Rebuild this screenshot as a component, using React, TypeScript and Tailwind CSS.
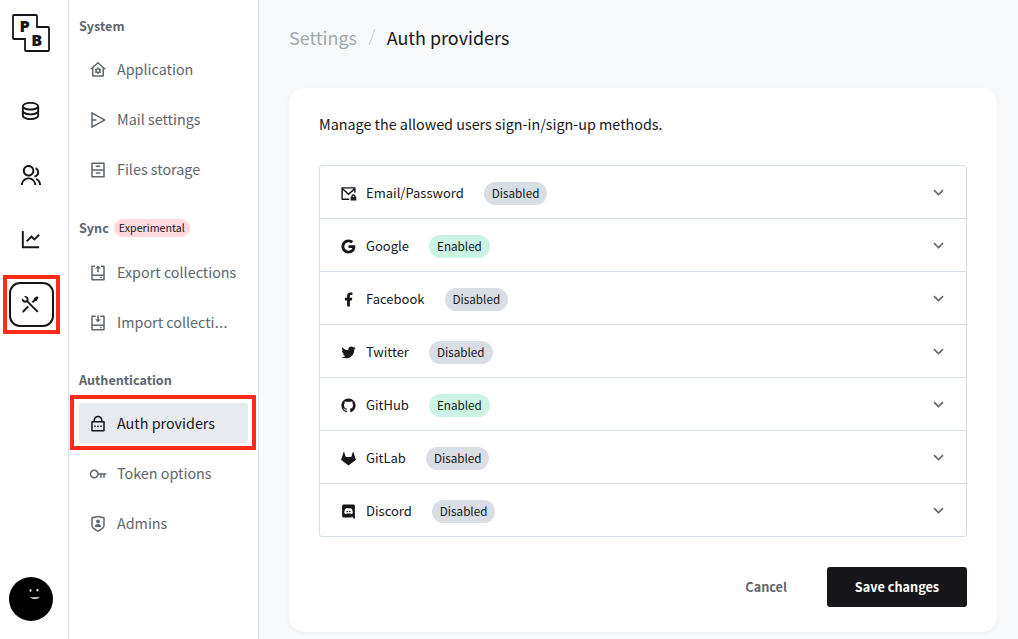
import React from "react";
import type { IconType } from "react-icons";
import {
  RiDatabase2Line, RiGroupLine, RiLineChartLine, RiToolsLine, RiHomeGearLine, RiSendPlane2Line,
  RiArchiveDrawerLine, RiUninstallLine, RiInstallLine, RiLockPasswordLine, RiKeyLine, RiShieldUserLine,
  RiMailLockLine, RiGoogleFill, RiFacebookFill, RiTwitterFill, RiGithubFill,
  RiArrowDownSLine,
} from "react-icons/ri";

type IconProps = { size?: number };

function Discord({ size = 17 }: IconProps) {
  return (
    <svg width={size} height={size} viewBox="0 0 24 24" fill="currentColor">
      <path d="M10.076 11c.6 0 1.086.45 1.075 1 0 .55-.474 1-1.075 1C9.486 13 9 12.55 9 12s.475-1 1.076-1zm3.848 0c.601 0 1.076.45 1.076 1s-.475 1-1.076 1c-.59 0-1.075-.45-1.075-1s.474-1 1.075-1zm4.967-9C20.054 2 21 2.966 21 4.163V23l-2.211-1.995-1.245-1.176-1.317-1.25.546 1.943H5.109C3.946 20.522 3 19.556 3 18.359V4.163C3 2.966 3.946 2 5.109 2H18.89zm-3.97 13.713c2.273-.073 3.148-1.596 3.148-1.596 0-3.381-1.482-6.122-1.482-6.122-1.48-1.133-2.89-1.102-2.89-1.102l-.144.168c1.749.546 2.561 1.334 2.561 1.334a8.263 8.263 0 0 0-3.096-1.008 8.527 8.527 0 0 0-2.077.02c-.062 0-.114.011-.175.021-.36.032-1.235.168-2.335.662-.38.178-.607.305-.607.305s.854-.83 2.705-1.376l-.103-.126s-1.409-.031-2.89 1.103c0 0-1.481 2.74-1.481 6.121 0 0 .864 1.522 3.137 1.596 0 0 .38-.472.69-.871-1.307-.4-1.8-1.24-1.8-1.24s.102.074.287.179c.01.01.02.021.041.031.031.022.062.032.093.053.257.147.514.262.75.357.422.168.926.336 1.513.452a7.06 7.06 0 0 0 2.664.01 6.666 6.666 0 0 0 1.491-.451c.36-.137.761-.337 1.183-.62 0 0-.514.861-1.862 1.25.309.399.68.85.68.85z" />
    </svg>
  );
}

function GitLab({ size = 17 }: IconProps) {
  return (
    <svg width={size} height={size} viewBox="0 0 24 24" fill="currentColor">
      <path d="M5.868 2.75L8 10h8l2.132-7.25a.4.4 0 0 1 .765-.01l3.495 10.924a.5.5 0 0 1-.173.55L12 22 1.78 14.214a.5.5 0 0 1-.172-.55L5.103 2.74a.4.4 0 0 1 .765.009z" />
    </svg>
  );
}

function Logo() {
  return (
    <svg width="38" height="38" viewBox="0 0 38 38" fill="none">
      <path d="M1 2Q1 1 2 1H24Q25 1 25 2V13H36Q37 13 37 14V36Q37 37 36 37H14Q13 37 13 36V25H2Q1 25 1 24Z" stroke="#16161a" strokeWidth="1.8" />
      <text x="7.4" y="18.2" fontFamily="'Open Sans', sans-serif" fontWeight="800" fontSize="16.3" fill="#16161a">P</text>
      <text x="19.2" y="31.6" fontFamily="'Open Sans', sans-serif" fontWeight="800" fontSize="16.3" fill="#16161a">B</text>
    </svg>
  );
}

function RailItem({ icon: Icon, active }: { icon: IconType; active?: boolean }) {
  return (
    <div className={active
      ? "flex h-[45px] w-[45px] items-center justify-center rounded-[11px] border-2 border-[#16161a]"
      : "flex h-[45px] w-[45px] items-center justify-center"}>
      <Icon size={23} className="mr-0.5" />
    </div>
  );
}

function NavItem({ icon: Icon, label, clipped, active }: { icon: IconType; label: string; clipped?: boolean; active?: boolean }) {
  return (
    <div className={active
      ? "flex h-10 items-center gap-2.5 rounded-[3px] bg-[#e7eaef] px-2.5 text-[#16161a]"
      : "flex h-10 items-center gap-2.5 px-2.5 text-[#5c666c]"}>
      <Icon size={18} className="mt-0.5 shrink-0" />
      <span className="truncate text-[14.35px] leading-6">
        {label}
        {clipped && <span className="font-['Open_Sans',sans-serif] text-[17px] leading-none tracking-[1px]">…</span>}
      </span>
    </div>
  );
}

function Heading({ children }: { children: React.ReactNode }) {
  return <div className="flex h-6 items-center gap-[5px] text-[12.6px] font-bold leading-6 text-[#5c666c]">{children}</div>;
}

const providers: { icon: React.ComponentType<IconProps>; name: string; on?: boolean }[] = [
  { icon: RiMailLockLine, name: "Email/Password" },
  { icon: RiGoogleFill, name: "Google", on: true },
  { icon: RiFacebookFill, name: "Facebook" },
  { icon: RiTwitterFill, name: "Twitter" },
  { icon: RiGithubFill, name: "GitHub", on: true },
  { icon: GitLab, name: "GitLab" },
  { icon: Discord, name: "Discord" },
];

export default function App() {
  return (
    <div className="relative flex h-[639px] w-[1018px] overflow-hidden bg-[#f7f9fa] font-['Noto_Sans_CJK_SC',sans-serif] text-[#16161a]">
      <aside className="flex w-[69px] shrink-0 flex-col border-r border-[#d7dde4] bg-white pt-3.5">
        <div className="pl-3"><Logo /></div>
        <nav className="mt-9 flex flex-col gap-[19.7px] pl-[9px]">
          <RailItem icon={RiDatabase2Line} />
          <RailItem icon={RiGroupLine} />
          <RailItem icon={RiLineChartLine} />
          <RailItem icon={RiToolsLine} active />
        </nav>
        <div className="mb-[18px] ml-[9px] mt-auto h-11 w-11 rounded-full bg-black">
          <svg width="44" height="44" viewBox="0 0 44 44" fill="white">
            <rect x="20.6" y="12.4" width="1.8" height="2.2" />
            <rect x="27.5" y="12" width="1.8" height="2.3" />
            <path d="M21.4 20.3Q24 20.7 26 20.6T30.4 20.2Q29 21.8 26 21.8Q23 21.9 21.4 20.3Z" stroke="white" strokeWidth="0.3" />
          </svg>
        </div>
      </aside>

      <aside className="flex w-[190px] shrink-0 flex-col border-r border-[#d7dde4] bg-white pl-2.5 pr-2.5 pt-3.5">
        <Heading>System</Heading>
        <div className="mt-[11.4px] flex flex-col gap-2.5">
          <NavItem icon={RiHomeGearLine} label="Application" />
          <NavItem icon={RiSendPlane2Line} label="Mail settings" />
          <NavItem icon={RiArchiveDrawerLine} label="Files storage" />
        </div>
        <div className="mt-[26.6px]">
          <Heading>
            Sync
            <span className="flex h-[18px] items-center rounded-full bg-[#ffd9e0] px-[5px] text-[10.7px] font-normal leading-4 text-[#16161a]"><span>Experimental</span></span>
          </Heading>
        </div>
        <div className="mt-[12.4px] flex flex-col gap-2.5">
          <NavItem icon={RiUninstallLine} label="Export collections" />
          <NavItem icon={RiInstallLine} label="Import collecti" clipped />
        </div>
        <div className="mt-[25.6px]"><Heading>Authentication</Heading></div>
        <div className="mt-[11px] flex flex-col gap-2.5">
          <NavItem icon={RiLockPasswordLine} label="Auth providers" active />
          <NavItem icon={RiKeyLine} label="Token options" />
          <NavItem icon={RiShieldUserLine} label="Admins" />
        </div>
      </aside>

      <main className="flex min-w-0 flex-1 flex-col pl-[30px] pr-[21px] pt-[25px]">
        <div className="flex h-6 items-center text-[17.95px] leading-6">
          <span className="text-[#a0a9ae]">Settings</span>
          <svg width="29.7" height="20" viewBox="0 0 30 20"><path d="M18.2 2L12.3 18" stroke="#ced3d7" strokeWidth="1.2" /></svg>
          <span>Auth providers</span>
        </div>
        <section className="mt-[39px] h-[544px] rounded-[15px] bg-white px-[30px] pt-6 shadow-[0_2px_5px_rgba(0,0,0,0.05)]">
          <p className="h-6 text-[14.35px] leading-6">Manage the allowed users sign-in/sign-up methods.</p>
          <div className="mt-[29px] rounded-[3px] border border-[#d7dde4]">
            {providers.map((p, i) => (
              <div key={p.name} className={i === 0
                ? "flex h-[52px] items-center pl-[19.5px] pr-[18px] pt-0.5"
                : "flex h-[53px] items-center border-t border-[#d7dde4] pl-[19.5px] pr-[18px] pt-0.5"}>
                <p.icon size={17} />
                <span className="ml-[9.5px] text-[13.03px] leading-6">{p.name}</span>
                <span className={p.on
                  ? "ml-5 flex h-[23px] items-center rounded-full bg-[#cbf4e4] px-2 text-[11.7px] leading-5"
                  : "ml-5 flex h-[23px] items-center rounded-full bg-[#d9dee5] px-2 text-[11.7px] leading-5"}>
                  <span>{p.on ? "Enabled" : "Disabled"}</span>
                </span>
                <RiArrowDownSLine size={19} className="mb-0.5 ml-auto text-[#5c666c]" />
              </div>
            ))}
          </div>
          <div className="mt-[30px] flex items-center justify-end text-[12.7px] font-bold leading-6">
            <span className="mr-10 text-[#5c666c]">Cancel</span>
            <button className="h-10 w-[140px] rounded-[3px] bg-[#16161a] text-white">Save changes</button>
          </div>
        </section>
      </main>

      <div className="pointer-events-none absolute left-[3px] top-[275px] h-[59px] w-[57px] border-4 border-[#ff2a1a]" />
      <div className="pointer-events-none absolute left-[70px] top-[395px] h-[55px] w-[186px] border-4 border-[#ff2a1a]" />
    </div>
  );
}
